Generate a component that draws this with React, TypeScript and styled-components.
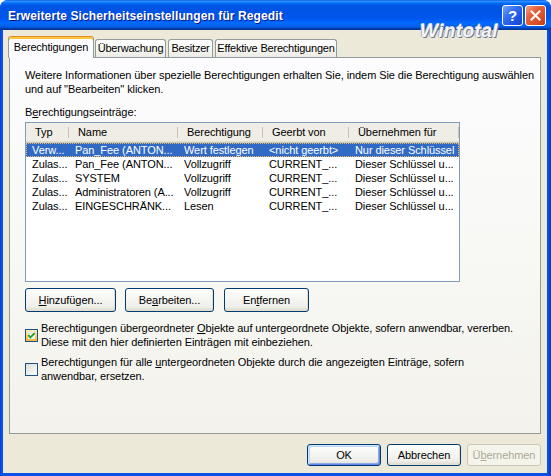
import React from 'react';
import styled, { createGlobalStyle, css } from 'styled-components';

const Global = createGlobalStyle`
  *, *::before, *::after { box-sizing: border-box; }
  html, body { margin: 0; padding: 0; background: #ffffff; }
  body { font-family: "Liberation Sans", Arial, sans-serif; font-size: 11px; letter-spacing: -0.08px; color: #000; }
  #root { width: 551px; height: 476px; }
`;

const Window = styled.div`
  position: relative;
  width: 551px;
  height: 476px;
  display: flex;
  flex-direction: column;
  background: linear-gradient(to right, #0831d9 0px, #0a52e6 1px, #0a52e6 548px, #0a3cc8 550px);
  border-radius: 8px 8px 0 0;
  overflow: hidden;
`;

const TitleBar = styled.div`
  height: 30px;
  flex: none;
  display: flex;
  align-items: center;
  padding: 0 5px 0 8px;
  background: linear-gradient(to bottom, #0058ee 0%, #3593ff 4%, #288eff 6%, #127dff 8%, #036ffc 10%, #0262ee 14%, #0057e5 20%, #0054e3 24%, #0055eb 56%, #005bf5 66%, #026afe 76%, #0062ef 86%, #0052d6 92%, #0040ab 94%, #003092 100%);
`;

const TitleText = styled.div`
  flex: 1;
  color: #ffffff;
  font-family: "Liberation Sans", Arial, sans-serif;
  font-weight: bold;
  font-size: 12px;
  letter-spacing: 0.1px;
  text-shadow: 1px 1px 0 #0a1883;
  white-space: nowrap;
  padding-top: 1px;
`;

const TitleButtons = styled.div`
  display: flex;
  gap: 2px;
  padding-top: 1px;
`;

const CaptionButton = styled.div<{ $kind: 'help' | 'close' }>`
  width: 21px;
  height: 21px;
  border: 1px solid #ffffff;
  border-radius: 3px;
  display: flex;
  align-items: center;
  justify-content: center;
  color: #fff;
  font-family: "Liberation Sans", Arial, sans-serif;
  font-weight: bold;
  font-size: 15px;
  ${(p) =>
    p.$kind === 'help'
      ? css`background: linear-gradient(135deg, #7aa6ff 0%, #3a72f2 35%, #1d55e2 70%, #1846c8 100%);`
      : css`background: linear-gradient(135deg, #f6a088 0%, #e4643f 35%, #d8502a 70%, #c23c18 100%);`}
`;

const Watermark = styled.div`
  position: absolute;
  left: 420px;
  top: 20px;
  font-family: "Liberation Sans", Arial, sans-serif;
  font-weight: bold;
  font-style: italic;
  font-size: 19px;
  letter-spacing: 0.4px;
  color: #f4f5f8;
  text-shadow: 1px 1px 0 #6f7888, -1px 0 0 #a9b0bd, 0 -1px 0 #c9ced8;
  pointer-events: none;
`;

const Client = styled.div`
  flex: 1;
  margin: 0 4px 3px 3px;
  background: #ece9d8;
  display: flex;
  flex-direction: column;
  padding: 6px 6px 0 6px;
`;

const TabStrip = styled.div`
  height: 21px;
  display: flex;
  align-items: flex-end;
  position: relative;
  z-index: 1;
`;

const Tab = styled.div<{ $active?: boolean; $w: number; $ml: number }>`
  width: ${(p) => p.$w}px;
  margin-left: ${(p) => p.$ml}px;
  border: 1px solid #919b9c;
  border-bottom: none;
  border-radius: 3px 3px 0 0;
  text-align: center;
  white-space: nowrap;
  font-size: 11px;
  letter-spacing: -0.2px;
  overflow: hidden;
  ${(p) =>
    p.$active
      ? css`
          height: 22px;
          margin-bottom: -1px;
          background: #fcfcfe;
          border-top: 1px solid #e68b2c;
          box-shadow: inset 0 2px 0 #ffc73c;
          line-height: 19px;
          padding-top: 1px;
        `
      : css`
          height: 18px;
          background: linear-gradient(to bottom, #ffffff 0%, #f7f7f4 50%, #ecebe5 100%);
          line-height: 17px;
        `}
`;

const Panel = styled.div`
  height: 377px;
  flex: none;
  border: 1px solid #919b9c;
  background: linear-gradient(to bottom, #fcfcfe 0%, #f8f8f5 50%, #f3f2ec 100%);
  padding: 10px 15px 0 15px;
  display: flex;
  flex-direction: column;
`;

const Intro = styled.p`
  margin: 0;
  line-height: 14px;
  white-space: nowrap;
`;

const Label = styled.div`
  margin-top: 9px;
  line-height: 14px;
`;

const Key = styled.span`
  text-decoration: underline;
  text-underline-offset: 1px;
`;

const ListView = styled.div`
  margin-top: 3px;
  width: 435px;
  height: 160px;
  border: 1px solid #7f9db9;
  background: #ffffff;
`;

const columns = '43px 109px 85px 86px 110px';

const HeaderRow = styled.div`
  display: grid;
  grid-template-columns: ${columns};
  height: 20px;
  background: #efede6;
  box-shadow: inset 0 -1px 0 #d0ccbc, inset 0 -2px 0 #e2dece;
`;

const HeaderCell = styled.div`
  position: relative;
  padding-left: 9px;
  line-height: 19px;
  white-space: nowrap;
  overflow: hidden;
  &::after {
    content: '';
    position: absolute;
    right: 0;
    top: 4px;
    bottom: 5px;
    width: 1px;
    background: #c7c5b2;
    box-shadow: 1px 0 0 #ffffff;
  }
`;

const Row = styled.div<{ $selected?: boolean }>`
  display: grid;
  grid-template-columns: ${columns};
  height: 14px;
  line-height: 14px;
  ${(p) =>
    p.$selected &&
    css`
      background: #316ac5;
      color: #ffffff;
      outline: 1px dotted #e9b96e;
      outline-offset: -1px;
    `}
`;

const Cell = styled.div`
  padding-left: 6px;
  white-space: nowrap;
  overflow: hidden;
`;

const ButtonRow = styled.div`
  margin-top: 6px;
  display: flex;
`;

const Button = styled.button<{ $w: number; $h?: number; $ml?: number; $default?: boolean }>`
  width: ${(p) => p.$w}px;
  height: ${(p) => p.$h ?? 24}px;
  margin-left: ${(p) => p.$ml ?? 0}px;
  padding: 0;
  font-family: "Liberation Sans", Arial, sans-serif;
  font-size: 11px;
  letter-spacing: -0.08px;
  color: #000;
  border: 1px solid #003c74;
  border-radius: 3px;
  background: linear-gradient(to bottom, #ffffff 0%, #f6f6f3 40%, #efeee9 80%, #dcd8cc 100%);
  box-shadow: inset -1px -1px 0 #e3ded0;
  ${(p) =>
    p.$default &&
    css`
      box-shadow: inset 1px 1px 0 #cee7ff, inset -1px -1px 0 #6982ee, inset 2px 2px 0 #bcd4f6, inset -2px -2px 0 #89ade4;
    `}
  &:disabled {
    color: #aca899;
    border-color: #c9c7ba;
    background: #f5f4ea;
    box-shadow: none;
  }
`;

const CheckRow = styled.label<{ $mt: number }>`
  margin-top: ${(p) => p.$mt}px;
  display: flex;
  align-items: center;
  gap: 3px;
`;

const CheckText = styled.div`
  line-height: 14px;
  white-space: nowrap;
`;

const BoxSvg = styled.svg`
  flex: none;
  width: 13px;
  height: 13px;
  display: block;
`;

const Footer = styled.div`
  margin-top: 10px;
  display: flex;
  justify-content: flex-end;
  gap: 6px;
`;

const CheckBox = ({ checked }: { checked?: boolean }) => (
  <BoxSvg viewBox="0 0 13 13">
    <defs>
      <linearGradient id="cbOff" x1="0" y1="0" x2="1" y2="1">
        <stop offset="0" stopColor="#dcdcd7" />
        <stop offset="1" stopColor="#ffffff" />
      </linearGradient>
      <linearGradient id="cbHot" x1="0" y1="0" x2="0" y2="1">
        <stop offset="0" stopColor="#fff0cf" />
        <stop offset="1" stopColor="#f8b330" />
      </linearGradient>
      <linearGradient id="cbIn" x1="0" y1="0" x2="1" y2="1">
        <stop offset="0" stopColor="#e6e6e0" />
        <stop offset="1" stopColor="#fbfbf9" />
      </linearGradient>
    </defs>
    {checked ? (
      <>
        <rect x="0.5" y="0.5" width="12" height="12" fill="url(#cbHot)" stroke="#1c5180" />
        <rect x="3" y="3" width="7" height="7" fill="url(#cbIn)" />
        <path d="M3.3 6.2 L5.4 8.4 L9.7 4.1" fill="none" stroke="#21a121" strokeWidth="1.9" />
      </>
    ) : (
      <rect x="0.5" y="0.5" width="12" height="12" fill="url(#cbOff)" stroke="#1c5180" />
    )}
  </BoxSvg>
);

const rows = [
  ['Verw...', 'Pan_Fee (ANTON...', 'Wert festlegen', '<nicht geerbt>', 'Nur dieser Schlüssel'],
  ['Zulas...', 'Pan_Fee (ANTON...', 'Vollzugriff', 'CURRENT_...', 'Dieser Schlüssel u...'],
  ['Zulas...', 'SYSTEM', 'Vollzugriff', 'CURRENT_...', 'Dieser Schlüssel u...'],
  ['Zulas...', 'Administratoren (A...', 'Vollzugriff', 'CURRENT_...', 'Dieser Schlüssel u...'],
  ['Zulas...', 'EINGESCHRÄNK...', 'Lesen', 'CURRENT_...', 'Dieser Schlüssel u...'],
];

const headers = ['Typ', 'Name', 'Berechtigung', 'Geerbt von', 'Übernehmen für'];

export default function App() {
  return (
    <>
      <Global />
      <Window>
        <TitleBar>
          <TitleText>Erweiterte Sicherheitseinstellungen für Regedit</TitleText>
          <TitleButtons>
            <CaptionButton $kind="help">?</CaptionButton>
            <CaptionButton $kind="close">
              <svg width="11" height="11" viewBox="0 0 11 11">
                <path d="M1.5 1.5 L9.5 9.5 M9.5 1.5 L1.5 9.5" stroke="#ffffff" strokeWidth="2" strokeLinecap="square" />
              </svg>
            </CaptionButton>
          </TitleButtons>
        </TitleBar>
        <Watermark>Wintotal</Watermark>
        <Client>
          <TabStrip>
            <Tab $active $w={86} $ml={-1}>Berechtigungen</Tab>
            <Tab $w={71} $ml={1}>Überwachung</Tab>
            <Tab $w={45} $ml={2}>Besitzer</Tab>
            <Tab $w={122} $ml={2}>Effektive Berechtigungen</Tab>
          </TabStrip>
          <Panel>
            <Intro>
              Weitere Informationen über spezielle Berechtigungen erhalten Sie, indem Sie die Berechtigung auswählen
              <br />
              und auf "Bearbeiten" klicken.
            </Intro>
            <Label>
              B<Key>e</Key>rechtigungseinträge:
            </Label>
            <ListView>
              <HeaderRow>
                {headers.map((h) => (
                  <HeaderCell key={h}>{h}</HeaderCell>
                ))}
              </HeaderRow>
              {rows.map((r, i) => (
                <Row key={i} $selected={i === 0}>
                  {r.map((c, j) => (
                    <Cell key={j}>{c}</Cell>
                  ))}
                </Row>
              ))}
            </ListView>
            <ButtonRow>
              <Button $w={91}>
                <Key>H</Key>inzufügen...
              </Button>
              <Button $w={89} $ml={9}>
                Be<Key>a</Key>rbeiten...
              </Button>
              <Button $w={85} $ml={10}>
                En<Key>t</Key>fernen
              </Button>
            </ButtonRow>
            <CheckRow $mt={9}>
              <CheckBox checked />
              <CheckText>
                Berechtigungen übergeordneter <Key>O</Key>bjekte auf untergeordnete Objekte, sofern anwendbar, vererben.
                <br />
                Diese mit den hier definierten Einträgen mit einbeziehen.
              </CheckText>
            </CheckRow>
            <CheckRow $mt={6}>
              <CheckBox />
              <CheckText>
                Berechtigungen für alle <Key>u</Key>ntergeordneten Objekte durch die angezeigten Einträge, sofern
                <br />
                anwendbar, ersetzen.
              </CheckText>
            </CheckRow>
          </Panel>
          <Footer>
            <Button $w={74} $h={22} $default>
              OK
            </Button>
            <Button $w={74} $h={22}>
              Abbrechen
            </Button>
            <Button $w={74} $h={22} disabled>
              Ü<Key>b</Key>ernehmen
            </Button>
          </Footer>
        </Client>
      </Window>
    </>
  );
}
